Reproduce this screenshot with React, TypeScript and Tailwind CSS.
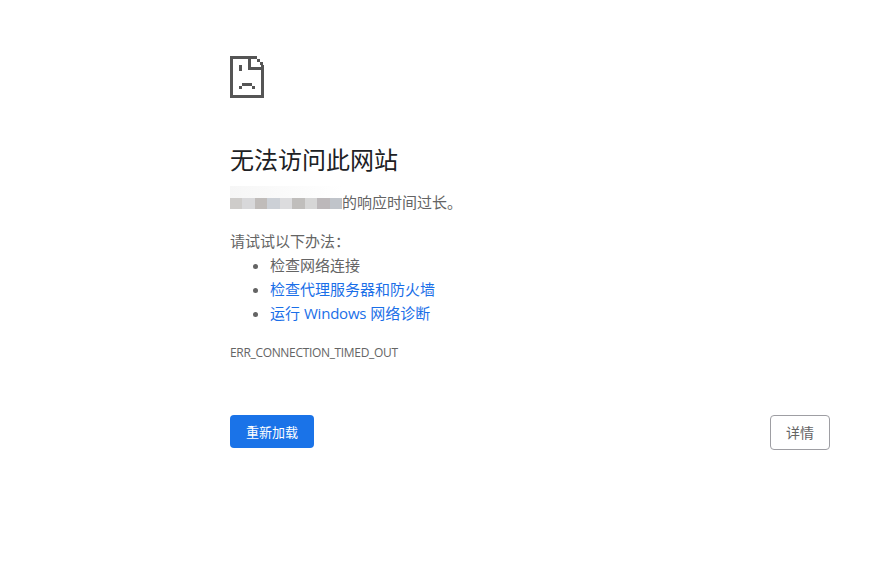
const cjk = "font-['Open_Sans','Noto_Sans_CJK_SC',sans-serif]";

const blocks = ["#ceccca", "#d8d8da", "#c0bcba", "#ccd0d6", "#dcdcde", "#c0bebc", "#d6d6d6", "#bcb8ba", "#c0c4ca"];

function SadTab() {
  return (
    <svg width="34" height="42" viewBox="0 0 34 42" shapeRendering="crispEdges" fill="#555555" className="block">
      <rect x="0" y="0" width="27" height="3" />
      <rect x="0" y="0" width="3" height="42" />
      <rect x="0" y="39" width="34" height="3" />
      <rect x="31" y="9" width="3" height="33" />
      <rect x="18" y="0" width="3" height="14" />
      <rect x="18" y="11" width="16" height="3" />
      <rect x="27" y="3" width="3" height="3" />
      <rect x="30" y="6" width="3" height="3" />
      <rect x="9" y="9" width="3" height="6" />
      <rect x="12" y="27" width="10" height="3" />
      <rect x="9" y="30" width="3" height="3" />
      <rect x="22" y="30" width="3" height="3" />
    </svg>
  );
}

export default function App() {
  return (
    <div className={`h-[572px] w-[892px] overflow-hidden bg-white pl-[230px] pr-[62px] pt-[56px] text-[15px] text-[#646464] ${cjk}`}>
      <SadTab />
      <h1 className="mt-[47px] text-[24px] font-normal leading-[30px] text-[#202124]">无法访问此网站</h1>
      <div className="mt-[15px] flex h-[24px] items-center leading-[24px]">
        <div className="relative top-[1px] flex h-[11px] w-[112px] shrink-0">
          <div className="absolute bottom-[11px] left-0 h-[12px] w-[112px] bg-gradient-to-r from-[#f6f6f6] to-white" />
          {blocks.map((c, i) => (
            <div key={i} className="h-[11px] flex-1" style={{ backgroundColor: c }} />
          ))}
        </div>
        <span>的响应时间过长。</span>
      </div>
      <p className="mt-[15px] leading-[24px]">请试试以下办法：</p>
      <ul className="list-disc pl-[40px] leading-[24px] marker:text-[#646464]">
        <li>检查网络连接</li>
        <li className="text-[#1a6fe8]">检查代理服务器和防火墙</li>
        <li className="text-[#1a6fe8]">运行 <span className="tracking-[-0.2px]">Windows</span> 网络诊断</li>
      </ul>
      <div className="mt-[20px] text-[12px] leading-[16px] tracking-[-0.33px] text-[#646464]">ERR_CONNECTION_TIMED_OUT</div>
      <div className="mt-[54px] flex items-start justify-between">
        <button className="h-[33px] w-[84px] rounded-[4px] bg-[#1a73e8] pt-[2px] text-[13px] text-white">重新加载</button>
        <button className="h-[35px] w-[60px] rounded-[4px] border border-[#9e9ea3] bg-white text-[14px] text-[#646464]">详情</button>
      </div>
    </div>
  );
}
